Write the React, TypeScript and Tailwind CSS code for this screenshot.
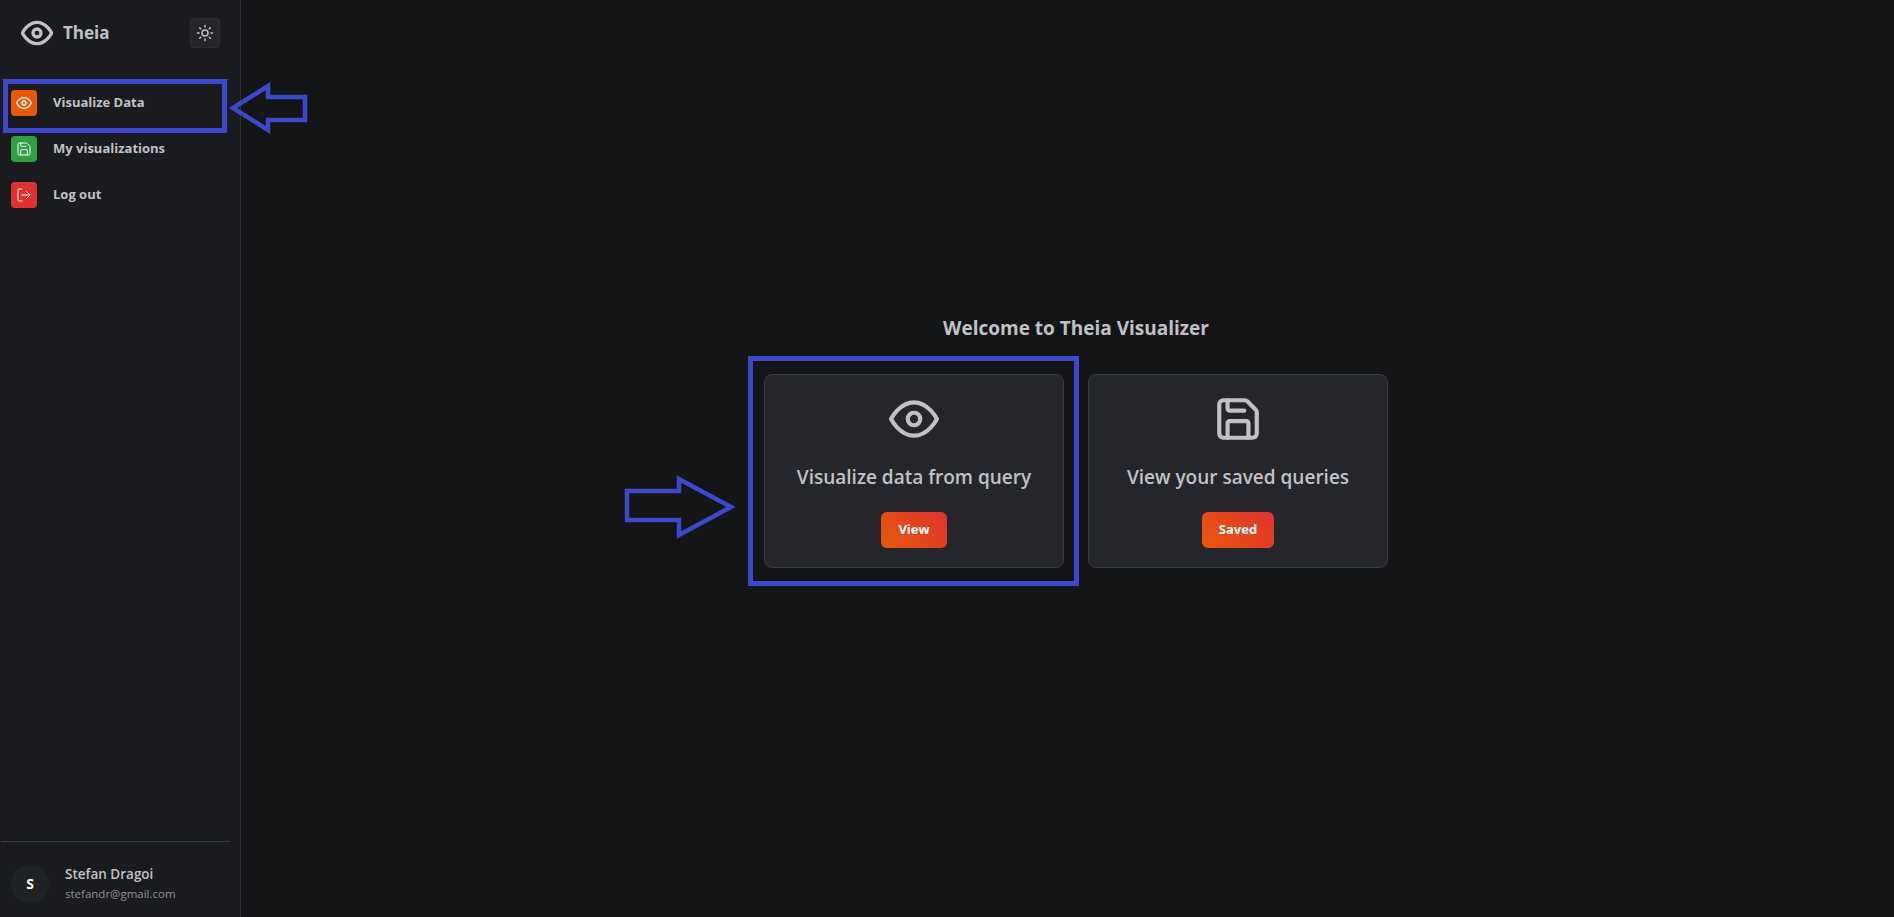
import { FiEye } from "react-icons/fi";
import { LogOut, Save, Sun } from "lucide-react";

const navItems = [
  { label: "Visualize Data", color: "bg-[#e8590c]", icon: <FiEye size={16} /> },
  { label: "My visualizations", color: "bg-[#2f9e44]", icon: <Save size={16} strokeWidth={1.5} /> },
  { label: "Log out", color: "bg-[#e03131]", icon: <LogOut size={16} strokeWidth={1.5} /> },
];

const cards = [
  { title: "Visualize data from query", button: "View", icon: <FiEye size={50} /> },
  { title: "View your saved queries", button: "Saved", icon: <Save size={50} /> },
];

const App = () => {
  return (
    <div className="relative flex h-[917px] w-full overflow-hidden bg-[#141517] font-['Open_Sans',sans-serif] text-[#c1c2c5]">
      <aside className="flex w-[241px] shrink-0 flex-col border-r border-[#2c2e33] bg-[#1a1b1e]">
        <div className="ml-px mr-[10px] flex h-[80px] items-center justify-between border-b border-[#2c2e33] pb-[14px] pl-5 pr-[10px]">
          <div className="flex items-center gap-[10px]">
            <FiEye size={32} strokeWidth={2.5} />
            <span className="text-[17px] font-bold">Theia</span>
          </div>
          <button className="flex size-[30px] items-center justify-center rounded border border-[#2c2e33] bg-[#25262b]">
            <Sun size={18} />
          </button>
        </div>

        <nav className="mt-[10px] flex flex-col gap-5 pl-[11px]">
          {navItems.map((item) => (
            <div key={item.label} className="flex h-[26px] items-center gap-4">
              <div className={`flex size-[26px] items-center justify-center rounded text-white ${item.color}`}>
                {item.icon}
              </div>
              <span className="text-[13px] font-bold">{item.label}</span>
            </div>
          ))}
        </nav>

        <div className="mt-auto ml-px mr-[10px] flex h-[76px] items-center gap-4 border-t border-[#373a40] pl-[10px] pt-2">
          <div className="flex size-[38px] items-center justify-center rounded-full bg-[#1f2225] text-sm font-bold text-white">
            S
          </div>
          <div className="flex flex-col">
            <span className="text-[13.5px] font-semibold leading-5">Stefan Dragoi</span>
            <span className="text-[11.5px] leading-5 text-[#909296]">stefandr@gmail.com</span>
          </div>
        </div>
      </aside>

      <main className="flex flex-1 flex-col items-center pt-[314px]">
        <h1 className="mb-[32px] ml-[17px] text-[19px] font-bold leading-7">Welcome to Theia Visualizer</h1>
        <div className="ml-[17px] flex gap-6">
          {cards.map((card) => (
            <div
              key={card.title}
              className="flex h-[194px] w-[300px] flex-col items-center rounded-lg border border-[#373a40] bg-[#25262b] pt-[19px]"
            >
              {card.icon}
              <p className="mt-[19px] text-[19px] font-semibold leading-7">{card.title}</p>
              <button className="mt-[21px] h-9 rounded-md bg-linear-[45deg] from-[#e8590c] to-[#e03131] px-[17px] text-[13px] font-bold text-white">
                {card.button}
              </button>
            </div>
          ))}
        </div>
      </main>

      {/* annotations drawn over the screenshot */}
      <div className="absolute left-[3px] top-[79px] h-[54px] w-[224px] border-[5px] border-[#3f48cc]" />
      <div className="absolute left-[748px] top-[356px] h-[230px] w-[331px] border-[5px] border-[#3f48cc]" />
      <svg className="absolute left-[225px] top-[80px]" width="86" height="56" fill="none" stroke="#3f48cc" strokeWidth="4.5">
        <path d="M8 28 L43 6 V17 H80 V40 H43 V50 Z" />
      </svg>
      <svg className="absolute left-[620px] top-[472px]" width="120" height="70" fill="none" stroke="#3f48cc" strokeWidth="4.5">
        <path d="M7 19 H59 V7 L111 35 L59 63 V48 H7 Z" />
      </svg>
    </div>
  );
};

export default App;
